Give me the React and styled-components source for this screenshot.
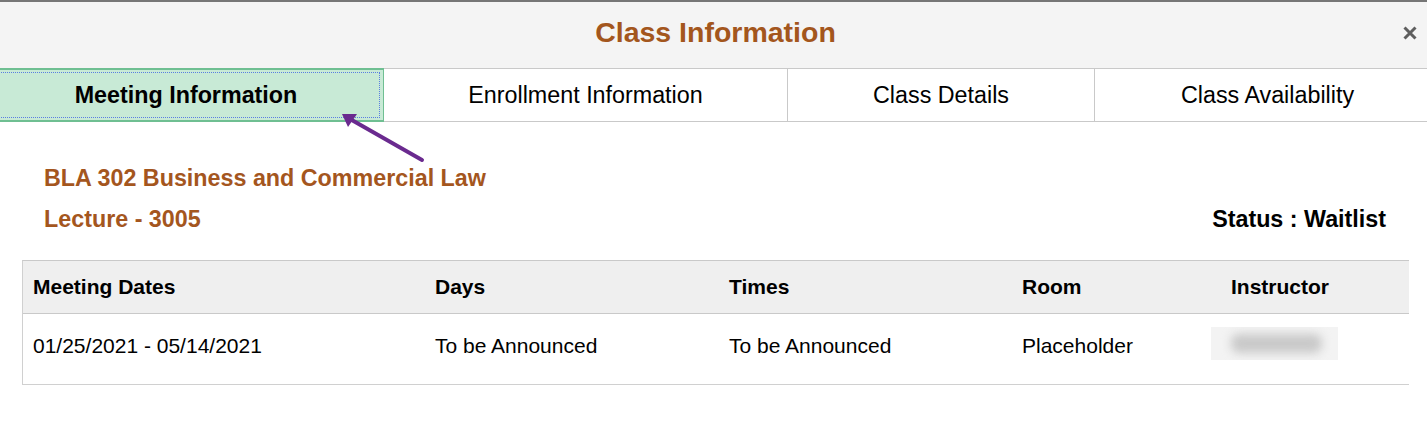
import React from "react";
import styled, { createGlobalStyle } from "styled-components";

const GlobalStyle = createGlobalStyle`
  html, body {
    margin: 0;
    padding: 0;
    background: #ffffff;
    font-family: "Liberation Sans", Arial, sans-serif;
    overflow: hidden;
  }
`;

const Modal = styled.div`
  position: relative;
  width: 1427px;
  height: 431px;
  border-top: 2px solid #767676;
  box-sizing: border-box;
  background: #fff;
  overflow: hidden;
`;

const Header = styled.div`
  position: relative;
  height: 66px;
  background: #f4f4f4;
  display: flex;
  justify-content: center;
  padding-left: 4px;
  box-sizing: border-box;
`;

const Title = styled.h1`
  margin: 0;
  font-size: 28.5px;
  line-height: 60px;
  font-weight: bold;
  color: #a3561d;
`;

const CloseButton = styled.button`
  position: absolute;
  right: 10px;
  top: 24px;
  width: 14px;
  height: 14px;
  padding: 0;
  border: none;
  background: transparent;
  cursor: pointer;
  display: flex;
`;

const TabBar = styled.div`
  display: grid;
  grid-template-columns: 395px 404px 307px 1fr;
  margin-left: -11px;
  border-top: 1px solid #c9c9c9;
  border-bottom: 1px solid #c9c9c9;
  height: 54px;
  box-sizing: border-box;
`;

const Tab = styled.div`
  position: relative;
  display: flex;
  align-items: center;
  justify-content: center;
  font-size: 23.3px;
  color: #000;
  font-weight: ${(p) => (p.$active ? "bold" : "normal")};
  background: ${(p) => (p.$active ? "#c8ead6" : "#fff")};
  border-right: 1px solid ${(p) => (p.$active ? "#6fbf92" : "#c9c9c9")};
  padding-left: ${(p) => `${p.$shift || 0}px`};
  box-sizing: border-box;
  ${(p) =>
    p.$active &&
    `
    margin-top: -1px;
    margin-bottom: -1px;
    border-top: 2px solid #6fbf92;
    border-bottom: 2px solid #6fbf92;
    outline: 1px dotted #5a7fe0;
    outline-offset: -5px;
  `}
  &:last-child {
    border-right: none;
  }
`;

const Content = styled.div`
  padding: 42px 0 0 22px;
`;

const Info = styled.div`
  padding-left: 22px;
  display: flex;
  flex-direction: column;
  gap: 13px;
`;

const InfoRow = styled.div`
  display: flex;
  justify-content: space-between;
  align-items: baseline;
  padding-right: 41px;
`;

const CourseText = styled.div`
  font-size: 23.3px;
  line-height: 28px;
  font-weight: bold;
  color: ${(p) => p.$color || "#a4561e"};
`;

const Table = styled.div`
  margin-top: 27px;
  width: 1386px;
  border-top: 1px solid #c9c9c9;
  border-left: 1px solid #d0d0d0;
  border-bottom: 1px solid #d0d0d0;
`;

const Row = styled.div`
  display: grid;
  grid-template-columns: 402px 294px 293px 209px 1fr;
  background: ${(p) => (p.$head ? "#efefef" : "#fff")};
  border-bottom: ${(p) => (p.$head ? "1px solid #c9c9c9" : "none")};
  height: ${(p) => (p.$head ? "52px" : "70px")};
  align-items: ${(p) => (p.$head ? "center" : "start")};
`;

const Cell = styled.div`
  position: relative;
  padding-left: 10px;
  font-size: 21px;
  line-height: 24px;
  font-weight: ${(p) => (p.$head ? "bold" : "normal")};
  padding-top: ${(p) => (p.$head ? "0" : "20px")};
  color: #000;
`;

const Blurred = styled.div`
  position: absolute;
  left: -10px;
  top: 13px;
  width: 127px;
  height: 33px;
  background: #f3f3f3;
  overflow: hidden;
  &::after {
    content: "";
    position: absolute;
    left: 20px;
    right: 16px;
    top: 7px;
    bottom: 7px;
    background: #c9c9c9;
    border-radius: 8px;
    filter: blur(5px);
  }
`;

const Arrow = styled.svg`
  position: absolute;
  left: 330px;
  top: 100px;
  pointer-events: none;
`;

const tabs = [
  { label: "Meeting Information", active: true },
  { label: "Enrollment Information" },
  { label: "Class Details" },
  { label: "Class Availability", shift: 13 },
];

const columns = ["Meeting Dates", "Days", "Times", "Room", "Instructor"];

export default function App() {
  return (
    <>
      <GlobalStyle />
      <Modal>
        <Header>
          <Title>Class Information</Title>
          <CloseButton aria-label="Close">
            <svg width="14" height="14" viewBox="0 0 14 14">
              <path d="M1.5 1.5 L12.5 12.5 M12.5 1.5 L1.5 12.5" stroke="#5e5e5e" strokeWidth="3" />
            </svg>
          </CloseButton>
        </Header>
        <TabBar>
          {tabs.map((t) => (
            <Tab key={t.label} $active={t.active} $shift={t.shift}>
              {t.label}
            </Tab>
          ))}
        </TabBar>
        <Content>
          <Info>
            <CourseText>BLA 302 Business and Commercial Law</CourseText>
            <InfoRow>
              <CourseText>Lecture - 3005</CourseText>
              <CourseText $color="#000">Status : Waitlist</CourseText>
            </InfoRow>
          </Info>
          <Table>
            <Row $head>
              {columns.map((c) => (
                <Cell key={c} $head>{c}</Cell>
              ))}
            </Row>
            <Row>
              <Cell>01/25/2021 - 05/14/2021</Cell>
              <Cell>To be Announced</Cell>
              <Cell>To be Announced</Cell>
              <Cell>Placeholder</Cell>
              <Cell>
                <Blurred />
              </Cell>
            </Row>
          </Table>
        </Content>
        <Arrow width="100" height="65" viewBox="0 0 100 65">
          <line x1="92" y1="58" x2="20" y2="17" stroke="#6a2a8f" strokeWidth="4" strokeLinecap="round" />
          <polygon points="12,12 27,12 18,25" fill="#6a2a8f" />
        </Arrow>
      </Modal>
    </>
  );
}
